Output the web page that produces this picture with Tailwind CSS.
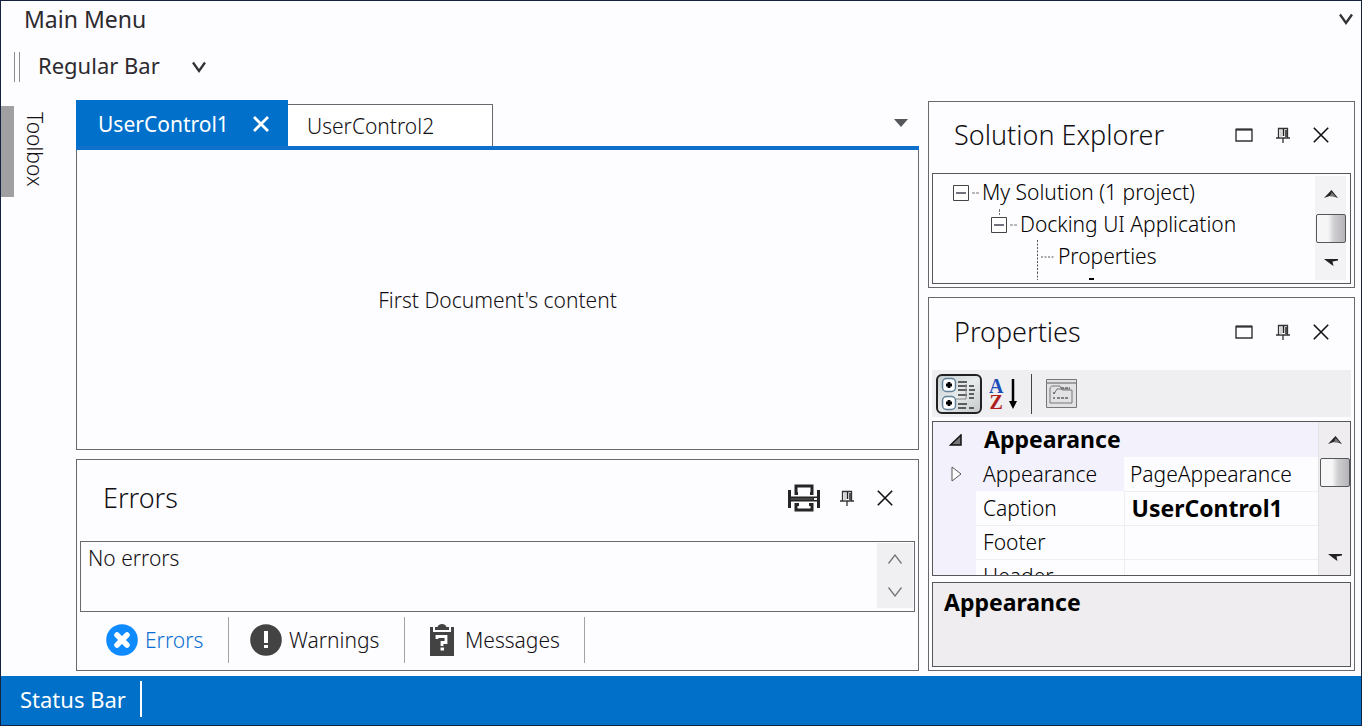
<!DOCTYPE html>
<html lang="en">
<head>
  <meta charset="UTF-8" />
  <meta name="viewport" content="width=device-width, initial-scale=1" />
  <title>Docking UI</title>
  <script src="https://cdn.jsdelivr.net/npm/@tailwindcss/browser@4"></script>
</head>
<body class="min-h-screen flex flex-col bg-[#fdfcfe] border border-[#16233f] font-['Noto_Sans','Open_Sans',sans-serif] font-light text-[21px] leading-8 text-[#121014]">

  <!-- Icons shared by the panel headers -->
  <svg class="hidden">
    <symbol id="maximize" viewBox="0 0 18 14"><path d="M1 1.5h16v11.5H1z" fill="none" stroke="#333" stroke-width="1.4"/><path d="M1 1.5h16" stroke="#333" stroke-width="2"/></symbol>
    <symbol id="pin" viewBox="0 0 14 16"><path d="M2.5 10.5V1.5h9v9M0 11h14M7 11v5" fill="none" stroke="#333" stroke-width="1.3"/><path d="M5 2v9" stroke="#aaa" stroke-width="1"/><path d="M7.5 2v7M10 3v7" stroke="#222" stroke-width="1.5"/></symbol>
    <symbol id="close" viewBox="0 0 16 16"><path d="M.8.8l14.4 14.4M15.2.8L.8 15.2" fill="none" stroke="currentColor" stroke-width="1.6"/></symbol>
    <symbol id="chevron" viewBox="0 0 14 12"><path d="M1 1.5l6 8.5 6-8.5" fill="none" stroke="#333" stroke-width="2.3"/></symbol>
    <symbol id="arrow-up" viewBox="0 0 14 8"><path d="M0 8L7.5 0 14 8 7 5.5z" fill="#222"/><path d="M7.5 2L12 6.5H6z" fill="#777"/></symbol>
    <symbol id="arrow-down" viewBox="0 0 14 8"><path d="M0 1h14v1.5L8.5 3.5 9.5 8 6.5 6z" fill="#222"/></symbol>
  </svg>

  <!-- Main menu -->
  <nav class="h-10 pb-1 pl-[23px] pr-2 flex items-center justify-between">
    <button class="text-[23px] font-normal text-[#2c2a2f]">Main Menu</button>
    <button aria-label="More menu items"><svg class="w-[14px] h-3"><use href="#chevron"/></svg></button>
  </nav>

  <!-- Regular bar -->
  <div class="h-[51px] pl-[13px] flex items-center">
    <span class="w-[6px] h-[30px] border-x border-[#8b8a8f]"></span>
    <button class="ml-[18px] pb-1 text-[22px] font-normal text-[#2c2a2f]">Regular Bar</button>
    <button class="ml-8" aria-label="Bar options"><svg class="w-[14px] h-3"><use href="#chevron"/></svg></button>
  </div>

  <div class="flex-1 flex pt-2 pb-[5px] pr-[6px]">

    <!-- Auto-hide strip -->
    <aside class="w-[75px] shrink-0 pt-[6px]">
      <button class="h-[91px] pt-[6px] flex items-center border-l-[13px] border-[#a09fa1] pl-[5px] [writing-mode:vertical-rl]">Toolbox</button>
    </aside>

    <main class="flex-1 min-w-0 flex flex-col gap-[9px]">
      <!-- Documents -->
      <section class="flex-1 flex flex-col">
        <div class="h-[50px] flex items-end border-b-4 border-[#0f70cc]">
          <div class="w-[212px] h-[46px] pt-[2px] pl-[22px] pr-[19px] flex items-center justify-between bg-[#0070cb] text-white font-normal">
            <button>UserControl1</button>
            <button aria-label="Close UserControl1"><svg class="w-4 h-4" viewBox="0 0 16 16"><path d="M1 1l14 14M15 1L1 15" stroke="#fff" stroke-width="2.8"/></svg></button>
          </div>
          <button class="w-[205px] h-[42px] pl-[19px] text-left border-t border-r border-[#67696e] bg-white">UserControl2</button>
          <button class="ml-auto mr-[11px] self-center" aria-label="Document list"><svg class="w-[14px] h-2" viewBox="0 0 14 8"><path d="M0 0h14L7 8z" fill="#55575b"/></svg></button>
        </div>
        <div class="flex-1 flex items-center justify-center border-x border-b border-[#67696e]">
          <p>First Document's content</p>
        </div>
      </section>

      <!-- Errors -->
      <section class="border border-[#67696e]">
        <header class="h-[81px] pb-[5px] pl-[26px] pr-[25px] flex items-center">
          <h2 class="mr-auto text-[27px]">Errors</h2>
          <button aria-label="Print"><svg class="w-8 h-7" viewBox="0 0 32 28"><path d="M10 9.5H8V2h16v7.5h-2M11 20.5H8V26h16v-5.500h-3M1.5 6v18M30.5 6v18" fill="none" stroke="#252525" stroke-width="3"/><path d="M2 15h28" stroke="#252525" stroke-width="5"/><path d="M3 15h22" stroke="#666" stroke-width="1"/><path d="M26 14h3v2h-3z" fill="#eee"/></svg></button>
          <button class="ml-5" aria-label="Auto hide"><svg class="w-[14px] h-4"><use href="#pin"/></svg></button>
          <button class="ml-[23px]" aria-label="Close"><svg class="w-4 h-4"><use href="#close"/></svg></button>
        </header>
        <div class="mx-[3px] h-[71px] flex justify-between border border-[#67696e] pl-[2px] pr-px pt-px pb-[3px]">
          <p class="pl-[5px] -mt-px">No errors</p>
          <div class="w-[36px] flex flex-col items-center justify-around bg-[#f0eff1]">
            <button aria-label="Scroll up"><svg class="w-[14px] h-[10px] block" viewBox="0 0 14 10"><path d="M.5 9.5L7 1l6.5 8.5" fill="none" stroke="#77757a" stroke-width="1.3"/></svg></button>
            <button aria-label="Scroll down"><svg class="w-[14px] h-[10px] block" viewBox="0 0 14 10"><path d="M.5.5L7 9 13.5.5" fill="none" stroke="#77757a" stroke-width="1.3"/></svg></button>
          </div>
        </div>
        <div class="h-[58px] pb-[2px] pl-[3px] flex items-center">
          <button class="w-[149px] h-[46px] pl-[26px] flex items-center gap-[7px] border-r border-[#a3a3a6] text-[#0a6fd0]">
            <svg class="w-8 h-8 shrink-0" viewBox="0 0 32 32"><circle cx="16" cy="16" r="15.8" fill="#0f8bff"/><path d="M11 11l10 10M21 11L11 21" stroke="#fff" stroke-width="5.5" stroke-linecap="round"/></svg>
            Errors
          </button>
          <button class="w-[176px] h-[46px] pl-[21px] flex items-center gap-[7px] border-r border-[#a3a3a6]">
            <svg class="w-8 h-8 shrink-0" viewBox="0 0 32 32"><circle cx="16" cy="16" r="15.8" fill="#434343"/><path d="M14 7h4v12h-4zM14 21h4v3h-4z" fill="#fff"/></svg>
            Warnings
          </button>
          <button class="w-[180px] h-[46px] pl-[25px] flex items-center gap-[11px] border-r border-[#a3a3a6]">
            <svg class="w-6 h-8 shrink-0" viewBox="0 0 24 32"><path d="M0 3h3v5h18V3h3v29H0z" fill="#434343"/><path d="M5 6V3h2.500C8 1 10 0 12 0s4 1 4.500 3H19v3z" fill="#434343"/><path d="M7 15v-2.500h9v6h-4v3.500" fill="none" stroke="#fff" stroke-width="2.8"/><path d="M10.5 23.5h3.500v3h-3.500z" fill="#fff"/></svg>
            Messages
          </button>
        </div>
      </section>
    </main>

    <div class="ml-[9px] mt-px w-[427px] shrink-0 flex flex-col gap-[9px]">
      <!-- Solution Explorer -->
      <section class="border border-[#67696e] px-[3px] pb-[3px]">
        <header class="h-[71px] pb-[5px] px-[22px] flex items-center">
          <h2 class="mr-auto text-[27px]">Solution Explorer</h2>
          <button aria-label="Maximize"><svg class="w-[18px] h-[14px]"><use href="#maximize"/></svg></button>
          <button class="ml-[23px]" aria-label="Auto hide"><svg class="w-[14px] h-4"><use href="#pin"/></svg></button>
          <button class="ml-[23px]" aria-label="Close"><svg class="w-4 h-4"><use href="#close"/></svg></button>
        </header>
        <div class="h-[111px] flex overflow-hidden border border-[#55575b] pt-[2px] pr-1 pb-[3px]">
          <ul class="flex-1 h-[104px] overflow-hidden text-black">
            <li class="pl-5 h-8 flex items-center">
              <svg class="w-[29px] h-8" viewBox="0 0 29 32"><path d="M.5 9.5h15v15H.5z" fill="#fff" stroke="#444"/><path d="M3 17h10" stroke="#445" stroke-width="1.5"/><path d="M19 17h7" stroke="#777" stroke-dasharray="3 1"/></svg>
              My Solution (1 project)
            </li>
            <li class="pl-[58px] h-8 flex items-center">
              <svg class="w-[29px] h-8" viewBox="0 0 29 32"><path d="M8.5 1v6" stroke="#777" stroke-dasharray="3 1"/><path d="M.5 9.5h15v15H.5z" fill="#fff" stroke="#444"/><path d="M3 17h10" stroke="#445" stroke-width="1.5"/><path d="M19 17h7" stroke="#777" stroke-dasharray="3 1"/></svg>
              Docking UI Application
            </li>
            <li class="pl-[104px] h-8 flex items-center">
              <svg class="w-[21px] h-8" viewBox="0 0 21 32"><path d="M.5 0v32M4 17h14" stroke="#555" stroke-dasharray="2 1.5"/></svg>
              Properties
            </li>
            <li class="pl-[104px] h-8 flex items-start">
              <svg class="w-[58px] h-8" viewBox="0 0 58 32"><path d="M.5 0v32" stroke="#555" stroke-dasharray="2 1.5"/><path d="M52 7h5" stroke="#000" stroke-width="2"/></svg>
            </li>
          </ul>
          <div class="w-[31px] flex flex-col items-center justify-between bg-[#f3f2f4]">
            <button class="h-9" aria-label="Scroll up"><svg class="w-[14px] h-2"><use href="#arrow-up"/></svg></button>
            <span class="w-[30px] h-[29px] rounded-xs border border-[#55575b] bg-linear-to-r from-[#f6f6f7] from-40% via-[#cfced1] via-60% to-[#b5b3b7]"></span>
            <button class="h-9" aria-label="Scroll down"><svg class="w-[14px] h-2"><use href="#arrow-down"/></svg></button>
          </div>
        </div>
      </section>

      <!-- Properties -->
      <section class="flex-1 flex flex-col border border-[#67696e] px-[3px] pb-[3px]">
        <header class="h-[72px] pb-[5px] shrink-0 px-[22px] flex items-center">
          <h2 class="mr-auto text-[27px]">Properties</h2>
          <button aria-label="Maximize"><svg class="w-[18px] h-[14px]"><use href="#maximize"/></svg></button>
          <button class="ml-[23px]" aria-label="Auto hide"><svg class="w-[14px] h-4"><use href="#pin"/></svg></button>
          <button class="ml-[23px]" aria-label="Close"><svg class="w-4 h-4"><use href="#close"/></svg></button>
        </header>
        <div class="h-[47px] mb-1 shrink-0 pl-1 flex items-center bg-[#efeef0]">
          <button aria-label="Categorized">
            <svg class="w-[46px] h-10" viewBox="0 0 46 40">
              <defs><linearGradient id="pressed" x2="1" y2="1"><stop stop-color="#c4cbce"/><stop offset=".5" stop-color="#e8ebec"/><stop offset="1" stop-color="#c3c6c8"/></linearGradient></defs>
              <rect x="1" y="1" width="44" height="38" rx="5" fill="url(#pressed)" stroke="#222" stroke-width="2"/>
              <rect x="6.5" y="4.5" width="13" height="13" rx="4" fill="#fff" stroke="#5f8199" stroke-width="1.5"/>
              <rect x="6.5" y="22.5" width="13" height="13" rx="4" fill="#fff" stroke="#5f8199" stroke-width="1.5"/>
              <path d="M10 11h6M13 8v6M10 29h6M13 26v6" stroke="#000" stroke-width="2.8"/>
              <path d="M22 8h9M22 12h9M22 16h9M22 21h9M22 30h9M22 34h8M33 12h5M33 16h6M33 20h5M33 24h5M33 34h5" stroke="#333" stroke-width="1.4"/>
              <path d="M20 25h10V10" fill="none" stroke="#888" stroke-width="1"/>
            </svg>
          </button>
          <button class="ml-[7px] flex items-center gap-[6px]" aria-label="Sort alphabetically">
            <span class="flex flex-col font-['Liberation_Serif',serif] font-bold text-[20px] leading-4"><span class="text-[#1d4fb8]">A</span><span class="text-[#b01e1e]">Z</span></span>
            <svg class="w-2 h-[30px]" viewBox="0 0 8 30"><path d="M4 0v24" stroke="#000" stroke-width="2.5"/><path d="M0 22h8l-4 8z"/></svg>
          </button>
          <span class="ml-[14px] w-px h-10 bg-[#444]"></span>
          <button class="ml-[14px]" aria-label="Property pages">
            <svg class="w-[31px] h-[29px]" viewBox="0 0 31 29"><path d="M.5.5h30v28H.5z" fill="#e2e1e3" stroke="#77767a"/><path d="M1 4h29" stroke="#8a898c" stroke-width="1.5"/><path d="M4 24V10c0-2 1-3 3-3h7l2 4h10v13zM8 15l3-5h13" fill="none" stroke="#77767a"/><path d="M7 14h2M7 19h2M11 19h11M15 9h9" stroke="#666" stroke-dasharray="3 1" stroke-width="1.3"/></svg>
          </button>
        </div>

        <div class="h-[155px] shrink-0 flex overflow-hidden border border-[#55575b]">
          <div class="flex-1 h-[153px] overflow-hidden">
            <table class="w-full table-fixed border-collapse text-left text-black">
              <colgroup><col class="w-[43px]"><col class="w-[148px]"><col></colgroup>
              <tr class="h-[35px] bg-[#f3f2fc]">
                <td class="p-0 pl-4"><svg class="w-[13px] h-3" viewBox="0 0 13 12"><path d="M1.5 11L12 1v10z" fill="#777" stroke="#111" stroke-width="1.5"/></svg></td>
                <th class="p-0 pb-px pl-2 text-[23px]" colspan="2">Appearance</th>
              </tr>
              <tr class="h-[34px]">
                <td class="p-0 pl-[18px] bg-[#f3f2fc]"><svg class="w-[11px] h-4" viewBox="0 0 11 16"><path d="M1 1l9 7-9 7z" fill="#fff" stroke="#555"/></svg></td>
                <td class="p-0 pl-[7px] bg-[#f3f2fc]">Appearance</td>
                <td class="p-0 pl-[6px] border-b border-[#eeedf2]">PageAppearance</td>
              </tr>
              <tr class="h-[34px]">
                <td class="p-0 bg-[#f3f2fc]"></td>
                <td class="p-0 pl-[7px] border-r border-b border-[#eeedf2]">Caption</td>
                <td class="p-0 pb-px pl-[7px] border-b border-[#eeedf2] font-bold text-[23px]">UserControl1</td>
              </tr>
              <tr class="h-[34px]">
                <td class="p-0 bg-[#f3f2fc]"></td>
                <td class="p-0 pl-[7px] border-r border-b border-[#eeedf2]">Footer</td>
                <td class="p-0 border-b border-[#eeedf2]"></td>
              </tr>
              <tr class="h-[34px]">
                <td class="p-0 bg-[#f3f2fc]"></td>
                <td class="p-0 pl-[7px] border-r border-[#eeedf2]">Header</td>
                <td class="p-0"></td>
              </tr>
            </table>
          </div>
          <div class="w-8 flex flex-col items-center bg-[#efedef] border-l border-[#e2e1e4]">
            <button class="h-9" aria-label="Scroll up"><svg class="w-[14px] h-2"><use href="#arrow-up"/></svg></button>
            <span class="w-[30px] h-[29px] rounded-xs border border-[#55575b] bg-linear-to-r from-[#f6f6f7] from-40% via-[#cfced1] via-60% to-[#b5b3b7]"></span>
            <button class="mt-auto h-9" aria-label="Scroll down"><svg class="w-[14px] h-2"><use href="#arrow-down"/></svg></button>
          </div>
        </div>

        <div class="mt-[6px] flex-1 border border-[#55575b] bg-[#efedef] pl-[11px] pt-[3px]">
          <h3 class="font-bold text-[23px] text-black">Appearance</h3>
        </div>
      </section>
    </div>
  </div>

  <!-- Status bar -->
  <footer class="h-[49px] pb-1 pl-[19px] flex items-center bg-[#0070c8] text-white font-normal">
    <span class="pr-[14px] border-r-2 border-white text-[22px] leading-9">Status Bar</span>
  </footer>

</body>
</html>
